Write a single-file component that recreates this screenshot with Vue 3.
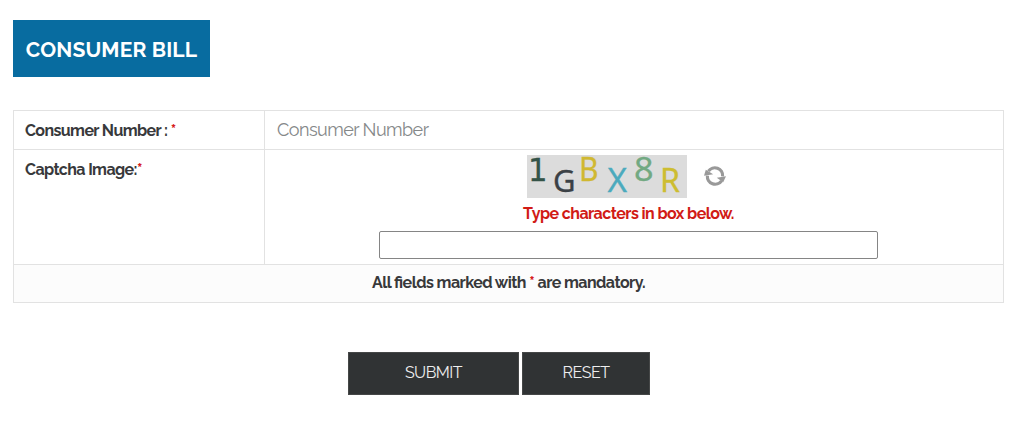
<template>
  <div class="bill-page">
    <h1 class="title">CONSUMER BILL</h1>

    <form class="bill-form" @submit.prevent @reset="resetForm">
      <div class="form-table">
        <label class="cell label-cell" for="consumer">
          <span>Consumer Number :</span> <span class="star">*</span>
        </label>
        <div class="cell input-cell">
          <input id="consumer" v-model="consumerNumber" class="number-input" type="text" placeholder="Consumer Number">
        </div>

        <div class="cell label-cell">
          <span>Captcha Image:</span><span class="star">*</span>
        </div>
        <div class="cell captcha-cell">
          <div class="captcha-row">
            <svg class="captcha" width="160" height="43" viewBox="0 0 160 43">
              <rect width="160" height="43" fill="#dcdcdc" />
              <text
                v-for="c in captcha"
                :key="c.char"
                :x="c.x"
                :y="c.y"
                :fill="c.color"
                :stroke="c.color"
                stroke-width="0.3"
                :font-family="c.font"
                :font-size="c.size"
                :textLength="c.width"
                lengthAdjust="spacingAndGlyphs"
              >{{ c.char }}</text>
            </svg>
            <button type="button" class="refresh" aria-label="Refresh">
              <svg width="24" height="22" viewBox="0 0 24 22">
                <g fill="none" stroke="#999" stroke-width="3.2">
                  <path d="M5.4 6.2A7.8 7.8 0 0 1 19.6 11.4" />
                  <path d="M18.6 15.8A7.8 7.8 0 0 1 4.4 10.6" />
                </g>
                <path d="M13.8 12.8L23 11.2L20.2 17.2Z" fill="#999" />
                <path d="M10.2 9.2L1 10.8L2.8 4.8Z" fill="#999" />
              </svg>
            </button>
          </div>
          <p class="hint">Type characters in box below.</p>
          <input v-model="captchaText" class="captcha-input" type="text">
        </div>

        <div class="cell note">
          <span>All fields marked with <span class="star">*</span> are mandatory.</span>
        </div>
      </div>

      <div class="actions">
        <button type="submit" class="btn submit">SUBMIT</button>
        <button type="reset" class="btn reset">RESET</button>
      </div>
    </form>
  </div>
</template>

<script setup>
import { ref } from 'vue';

const consumerNumber = ref('');
const captchaText = ref('');

const captcha = [
  { char: '1', x: 1, y: 26, size: 32, width: 19, color: '#345347', font: 'DejaVu Sans' },
  { char: 'G', x: 26, y: 37, size: 31, width: 22, color: '#3b4146', font: 'Noto Sans' },
  { char: 'B', x: 52, y: 26, size: 33, width: 19, color: '#d0b831', font: 'Noto Sans' },
  { char: 'X', x: 80.5, y: 37, size: 32, width: 19, color: '#4baabd', font: 'Noto Sans' },
  { char: '8', x: 107, y: 26, size: 32, width: 19, color: '#72a982', font: 'Noto Sans' },
  { char: 'R', x: 133, y: 37, size: 32, width: 19.5, color: '#cdbd31', font: 'Noto Sans' },
];

const resetForm = () => {
  consumerNumber.value = '';
  captchaText.value = '';
};
</script>

<style>
body {
  margin: 0;
  background: #fff;
}
</style>

<style scoped>
.bill-page {
  box-sizing: border-box;
  height: 421px;
  padding: 20px 20px 0 13px;
  font-family: Raleway, Lato, sans-serif;
  font-size: 16px;
  letter-spacing: -0.55px;
  font-feature-settings: "liga" 1;
  color: #38393b;
}

.title {
  display: flex;
  box-sizing: border-box;
  align-items: center;
  justify-content: center;
  width: 197px;
  height: 57px;
  margin: 0 0 33px;
  padding-top: 2px;
  background: #086ca0;
  color: #fff;
  font-size: 21px;
  font-weight: 700;
  letter-spacing: 0.15px;
  white-space: nowrap;
}

.form-table {
  display: grid;
  box-sizing: border-box;
  width: 991px;
  height: 193px;
  grid-template-columns: 251px 1fr;
  grid-template-rows: 39px 115px 1fr;
  border-top: 1px solid #e2e2e2;
  border-left: 1px solid #e2e2e2;
}

.cell {
  box-sizing: border-box;
  border-right: 1px solid #e2e2e2;
  border-bottom: 1px solid #e2e2e2;
}

.label-cell {
  padding: 10px 11px;
  font-weight: 700;
  letter-spacing: -0.6px;
  line-height: 20px;
}

.star {
  color: #d6201e;
}

.input-cell {
  display: flex;
  padding: 0 12px;
}

.number-input {
  width: 100%;
  padding: 0 0 1px;
  border: 0;
  outline: 0;
  background: transparent;
  font: 400 18px Raleway, Lato, sans-serif;
  letter-spacing: -0.55px;
}

.number-input::placeholder {
  color: #858889;
  opacity: 1;
}

.captcha-cell {
  display: flex;
  flex-direction: column;
  align-items: center;
  padding: 5px 11px 0 0;
}

.captcha-row {
  display: flex;
  align-items: center;
  gap: 16px;
  margin-right: 4px;
}

.captcha {
  display: block;
}

.refresh {
  display: flex;
  padding: 0 0 2px;
  border: 0;
  background: none;
  cursor: pointer;
}

.hint {
  margin: 6px 0 7px;
  color: #d11b16;
  font-weight: 700;
  line-height: 20px;
}

.captcha-input {
  box-sizing: border-box;
  width: 499px;
  height: 28px;
  border: 1px solid #858585;
  border-radius: 2px;
  background: #fff;
}

.note {
  grid-column: 1 / 3;
  padding-top: 8px;
  background: #fcfcfc;
  font-weight: 700;
  line-height: 20px;
  text-align: center;
}

.actions {
  display: flex;
  gap: 3px;
  margin: 49px 0 0 335px;
}

.btn {
  height: 43px;
  padding: 0 0 2px;
  border: 1px solid #454747;
  background: #303334;
  color: #eee;
  font: 400 16px Raleway, Lato, sans-serif;
  letter-spacing: -0.5px;
  cursor: pointer;
}

.submit {
  width: 171px;
}

.reset {
  width: 128px;
}
</style>
